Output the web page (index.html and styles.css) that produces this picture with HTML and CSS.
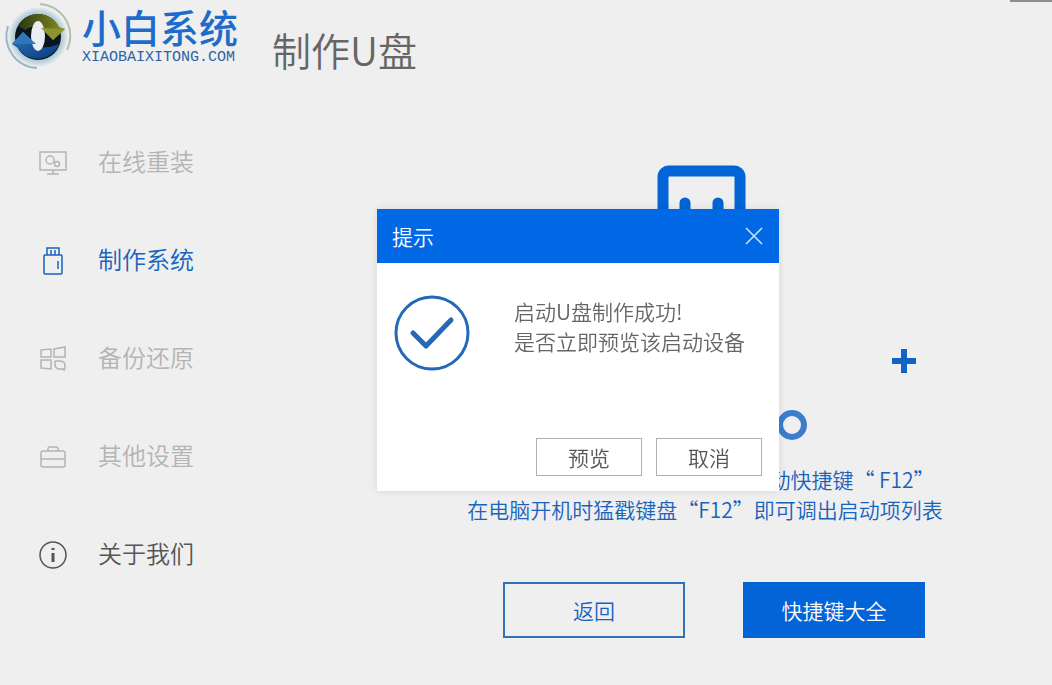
FILE: index.html
```html
<!DOCTYPE html>
<html lang="zh-CN">
<head>
    <meta charset="UTF-8">
    <meta name="viewport" content="width=device-width, initial-scale=1.0">
    <title>小白系统</title>
    <link rel="stylesheet" href="styles.css">
</head>
<body>
    <div class="app">
        <div class="window-controls"></div>
        <header class="header">
            <a href="#" class="brand">
                <svg class="brand-logo" viewBox="0 0 72 72" aria-hidden="true">
                    <defs>
                        <linearGradient id="olive" x1="0" y1="0" x2="1" y2="0">
                            <stop offset="0" stop-color="#2c3512"/>
                            <stop offset="1" stop-color="#84921f"/>
                        </linearGradient>
                        <linearGradient id="blue" x1="0" y1="0" x2="1" y2="1">
                            <stop offset="0" stop-color="#2b74bd"/>
                            <stop offset="1" stop-color="#083a78"/>
                        </linearGradient>
                        <radialGradient id="halo">
                            <stop offset="0.8" stop-color="#b3cbd6"/>
                            <stop offset="1" stop-color="#ebefee"/>
                        </radialGradient>
                    </defs>
                    <circle cx="38" cy="37" r="30" fill="url(#halo)"/>
                    <path d="M40 4 A32 32 0 0 1 67 50" fill="none" stroke="#b7c0ad" stroke-width="2"/>
                    <path d="M8 26 A32 32 0 0 0 37 68" fill="none" stroke="#9db5c8" stroke-width="2"/>
                    <circle cx="38" cy="37" r="23" fill="#0b151d"/>
                    <path d="M18 26 A23 23 0 0 1 59 27 L65 29 L53 40 L41 28 Q32 24 25 30Z" fill="url(#olive)"/>
                    <path d="M12 44 L23 32 L36 44 L33 46 Q44 50 59 44 A23 23 0 0 1 18 48Z" fill="url(#blue)"/>
                    <ellipse cx="38" cy="36" rx="7" ry="15" fill="#e9eef2"/>
                    <path d="M41 28 L65 29 L53 40Z" fill="#8a9530"/>
                    <path d="M12 44 L23 32 L36 44Z" fill="#2d77be"/>
                </svg>
                <span class="brand-text">
                    <span class="brand-name">小白系统</span>
                    <span class="brand-domain">XIAOBAIXITONG.COM</span>
                </span>
            </a>
            <h1 class="page-title">制作U盘</h1>
        </header>

        <div class="content">
            <nav class="sidebar">
                <a href="#" class="nav-item">
                    <svg class="nav-icon" viewBox="0 0 28 28" aria-hidden="true">
                        <path d="M1 3h26v18H1zM14 21v4M8 25h12"/>
                        <circle cx="11" cy="11" r="4"/>
                        <circle cx="18" cy="15" r="2.5"/>
                    </svg>
                    在线重装
                </a>
                <a href="#" class="nav-item active">
                    <svg class="nav-icon" viewBox="0 0 28 28" aria-hidden="true">
                        <path d="M8 8V1h12v7M12 3v5M16 3v5"/>
                        <rect x="5" y="8" width="18" height="19" rx="1"/>
                        <path d="M19 14v8"/>
                    </svg>
                    制作系统
                </a>
                <a href="#" class="nav-item">
                    <svg class="nav-icon" viewBox="0 0 28 28" aria-hidden="true">
                        <path d="M2 5l10-1v8H2zM15 4l11-2v10H15zM2 15h10v9L2 23z"/>
                        <path d="M16 16v3q0 5 5 5h4v2M18 16h4q4 1 4 4v4M16 16h2"/>
                    </svg>
                    备份还原
                </a>
                <a href="#" class="nav-item">
                    <svg class="nav-icon" viewBox="0 0 28 28" aria-hidden="true">
                        <rect x="2" y="8" width="24" height="16" rx="2"/>
                        <path d="M2 16h24M9 8V6q0-2 2-2h6q2 0 2 2v2"/>
                    </svg>
                    其他设置
                </a>
                <a href="#" class="nav-item about">
                    <svg class="nav-icon" viewBox="0 0 28 28" aria-hidden="true">
                        <circle cx="14" cy="14" r="13"/>
                        <path class="bold" d="M14 12v9M14 7v2"/>
                    </svg>
                    关于我们
                </a>
            </nav>

            <main class="main">
                <svg class="illustration" viewBox="0 0 460 290" aria-hidden="true">
                    <rect x="188" y="6" width="77" height="90" rx="6" fill="none" stroke="#0364d8" stroke-width="11"/>
                    <path d="M210 38v20M243 38v20" stroke="#0364d8" stroke-width="11" stroke-linecap="round"/>
                    <path d="M429 184v24M417 196h24" stroke="#1263c4" stroke-width="6"/>
                    <circle cx="317" cy="260" r="12" fill="none" stroke="#3c7dd0" stroke-width="6"/>
                </svg>
                <p class="hint">
                    您当前所使用的这台电脑开机启动快捷键“ F12”<br>
                    在电脑开机时猛戳键盘“F12”即可调出启动项列表
                </p>
                <div class="actions">
                    <button type="button" class="btn">返回</button>
                    <button type="button" class="btn btn-primary">快捷键大全</button>
                </div>
            </main>
        </div>
    </div>

    <div class="overlay">
        <div class="dialog" role="dialog" aria-labelledby="dialog-title">
            <div class="dialog-header">
                <h2 id="dialog-title">提示</h2>
                <button type="button" class="dialog-close" aria-label="关闭">
                    <svg viewBox="0 0 18 18" aria-hidden="true">
                        <path d="M1 1l16 16M17 1L1 17"/>
                    </svg>
                </button>
            </div>
            <div class="dialog-body">
                <svg class="success-icon" viewBox="0 0 76 76" aria-hidden="true">
                    <circle cx="38" cy="38" r="36" stroke-width="3"/>
                    <path d="M19 38l13 13 25-26" stroke-width="5"/>
                </svg>
                <p>启动U盘制作成功!<br>是否立即预览该启动设备</p>
            </div>
            <div class="dialog-footer">
                <button type="button" class="dialog-btn">预览</button>
                <button type="button" class="dialog-btn">取消</button>
            </div>
        </div>
    </div>
</body>
</html>
```

FILE: styles.css
```css
* {
    margin: 0;
    padding: 0;
    box-sizing: border-box;
}

body {
    background: #efefef;
    color: #666;
    font-family: "Noto Sans CJK SC", sans-serif;
    font-weight: 350;
}

button {
    font: inherit;
    cursor: pointer;
}

a {
    color: inherit;
    text-decoration: none;
}

.app {
    display: flex;
    flex-direction: column;
    min-height: 100vh;
    position: relative;
}

.window-controls {
    position: absolute;
    top: 0;
    right: 0;
    width: 42px;
    height: 2px;
    background: #8c8c8c;
}

.header {
    display: flex;
    gap: 32px;
    height: 96px;
}

.brand {
    display: flex;
    gap: 10px;
}

.brand-logo {
    width: 72px;
    height: 72px;
}

.brand-text {
    display: flex;
    flex-direction: column;
    gap: 6px;
    width: 158px;
    padding-top: 8px;
}

.brand-name {
    color: #1e6bcb;
    font-size: 39px;
    font-weight: 500;
    line-height: 36px;
}

.brand-domain {
    color: #2c62a8;
    font-family: "Liberation Mono", monospace;
    font-size: 15px;
    font-weight: 400;
    line-height: 16px;
}

.page-title {
    padding-top: 21px;
    color: #666;
    font-size: 39px;
    font-weight: 350;
    line-height: 56px;
}

.content {
    display: flex;
    flex: 1;
}

.sidebar {
    display: flex;
    flex-direction: column;
    gap: 50px;
    width: 358px;
    padding: 41px 0 0 39px;
}

.nav-item {
    display: flex;
    align-items: center;
    gap: 31px;
    color: #b4b4b4;
    font-size: 24px;
    line-height: 48px;
}

.nav-item.active {
    color: #1763bd;
}

.nav-item.about {
    color: #555;
}

.nav-icon {
    width: 28px;
    height: 28px;
    margin-top: 4px;
    fill: none;
    stroke: currentColor;
    stroke-width: 1.5;
}

.nav-icon .bold {
    stroke-width: 3;
}

.main {
    display: flex;
    flex: 1;
    flex-direction: column;
    align-items: center;
    padding-top: 69px;
}

.illustration {
    width: 460px;
    height: 290px;
}

.hint {
    margin-top: 9px;
    color: #1763bd;
    font-size: 21px;
    line-height: 30px;
    text-align: center;
    white-space: nowrap;
}

.actions {
    display: flex;
    gap: 58px;
    margin-top: 58px;
    padding-left: 18px;
}

.btn {
    width: 182px;
    height: 56px;
    border: 2px solid #3272bb;
    background: transparent;
    color: #1763bd;
    font-size: 21px;
}

.btn-primary {
    border-color: #0364d8;
    background: #0364d8;
    color: #fff;
}

.overlay {
    position: fixed;
    inset: 0;
    display: flex;
    align-items: center;
    justify-content: center;
    padding: 15px 0 0 104px;
}

.dialog {
    width: 402px;
    background: #fff;
    box-shadow: 0 0 8px rgba(0, 0, 0, 0.1);
}

.dialog-header {
    display: flex;
    align-items: center;
    justify-content: space-between;
    height: 54px;
    padding: 0 16px 0 15px;
    background: #0169e5;
    color: #fff;
}

.dialog-header h2 {
    font-size: 21px;
    font-weight: 350;
}

.dialog-close {
    width: 18px;
    height: 18px;
    border: none;
    background: none;
}

.dialog-close svg {
    display: block;
    stroke: #cfe6ff;
    stroke-width: 1.5;
}

.dialog-body {
    display: flex;
    gap: 44px;
    padding: 32px 17px 0;
}

.dialog-body p {
    padding-top: 1px;
    font-size: 21px;
    line-height: 30px;
}

.success-icon {
    width: 76px;
    height: 76px;
    fill: none;
    stroke: #2469b8;
    stroke-linecap: round;
    stroke-linejoin: round;
}

.dialog-footer {
    display: flex;
    justify-content: flex-end;
    gap: 14px;
    padding: 67px 17px 15px;
}

.dialog-btn {
    width: 106px;
    height: 38px;
    border: 1px solid #b0b0b0;
    background: #fff;
    color: #555;
    font-size: 21px;
}
```
